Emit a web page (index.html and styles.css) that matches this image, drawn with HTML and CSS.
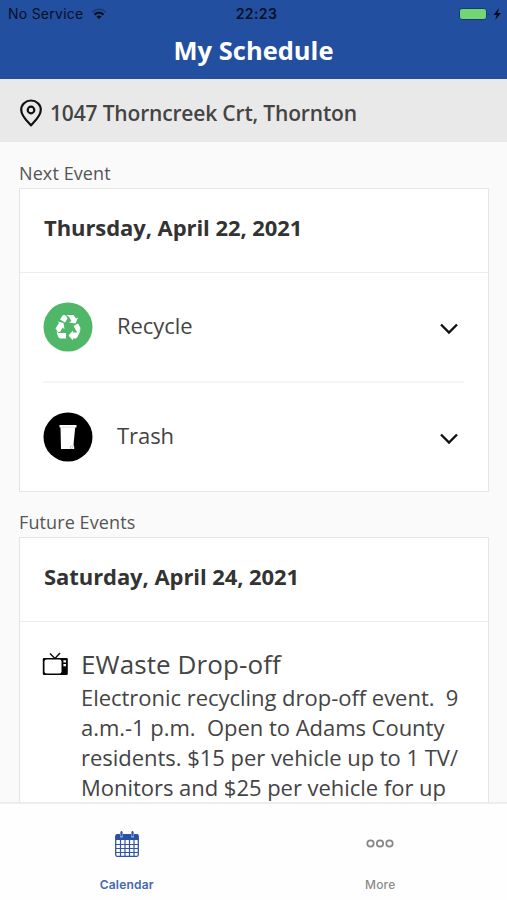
FILE: index.html
```html
<!DOCTYPE html>
<html lang="en">
<head>
    <meta charset="UTF-8">
    <meta name="viewport" content="width=device-width, initial-scale=1.0">
    <title>My Schedule</title>
    <link rel="stylesheet" href="styles.css">
</head>
<body>
    <header class="header">
        <div class="status">
            <div class="carrier">
                <span>No Service</span>
                <svg width="16" height="12" viewBox="0 0 16 12" fill="none" stroke="#08101f">
                    <path d="M1 4.2Q8 -2 15 4.2" stroke-width="1.3" opacity=".4" />
                    <path d="M3.4 6.6Q8 2.8 12.6 6.6" stroke-width="2.1" />
                    <path d="M5.4 8.4Q8 6.6 10.6 8.4L8 11z" fill="#08101f" stroke="none" />
                </svg>
            </div>
            <span class="clock">22:23</span>
            <div class="power">
                <svg width="45" height="14" viewBox="0 0 45 14">
                    <rect x="1.5" y="1.5" width="27" height="11" rx="2.5" fill="#73d673" stroke="#173a78" />
                    <path d="M30.5 5.5q2 1.5 0 3z" fill="#173a78" />
                    <path d="M41 1L35.5 8h3.2l-1.5 5L43 6h-3.3z" fill="#050b18" />
                </svg>
            </div>
        </div>
        <h1>My Schedule</h1>
    </header>

    <div class="address">
        <svg width="24" height="28" viewBox="0 0 24 28" fill="none" stroke="#111" stroke-width="2.2">
            <path d="M12 26.2C9.5 23.5 2.2 17.5 2.2 10.8a9.8 9.3 0 0 1 19.6 0C21.8 17.5 14.5 23.5 12 26.2z" />
            <circle cx="12" cy="11" r="3.3" />
        </svg>
        <span>1047 Thorncreek Crt, Thornton</span>
    </div>

    <main class="content">
        <h2 class="section-title">Next Event</h2>
        <section class="card next">
            <h3 class="date">Thursday, April 22, 2021</h3>
            <div class="row">
                <svg class="icon" width="50" height="50" viewBox="-25 -25 50 50">
                    <circle r="24.5" fill="#50b768" />
                    <g fill="#fff">
                        <path d="M-1.5 -12H5.5L8 -8.5L10 -9.5L7.5 -3.5L1 -4.5L3.5 -6L.5 -10.5z" />
                        <path d="M-4.5 -12Q-2.5 -12.5 -1.5 -10.5L-.5 -8.5L-3 -4.5L-8 -7.5L-5.5 -11.5z" />
                        <path d="M-10.5 -5.5L-4.5 -4L-3.5 2L-5.5 .8L-8 5H-10L-12.5 1.5L-9 -4z" />
                        <path d="M-11.5 4L-9.5 6H-2V11.5H-7.5Q-9 11.5 -10 9.5z" />
                        <path d="M5 3.5V5.5H8.5L12.5 3.5L9.5 10Q8.5 11.5 7 11.5H5V13.5L.5 8.5z" />
                        <path d="M10 -3.5L12.3 .5Q12.8 2 11.8 3.5Q11 5 9 5L5.5 -1z" />
                    </g>
                </svg>
                <span class="name">Recycle</span>
                <svg class="chevron" width="20" height="14" viewBox="0 0 20 14"><path d="M2 2.5L10 10.5L18 2.5" /></svg>
            </div>
            <div class="row">
                <svg class="icon" width="50" height="50" viewBox="-25 -25 50 50">
                    <circle r="24.5" fill="#000" />
                    <path d="M-8.5 -12H8.5V-9.5H7.2L5.5 8L6.2 9.5V12H-7L-7.5 -9.5H-8.5z" fill="#fff" />
                    <circle cx="3.6" cy="10.2" r="1.3" fill="#fff" stroke="#aaa" stroke-width=".6" />
                    <path d="M-8 -9.8H7" stroke="#bbb" stroke-width=".5" />
                </svg>
                <span class="name">Trash</span>
                <svg class="chevron" width="20" height="14" viewBox="0 0 20 14"><path d="M2 2.5L10 10.5L18 2.5" /></svg>
            </div>
        </section>

        <h2 class="section-title">Future Events</h2>
        <section class="card">
            <h3 class="date">Saturday, April 24, 2021</h3>
            <div class="event">
                <svg width="27" height="24" viewBox="0 0 27 24">
                    <path d="M8 1.5L13 6.5L18 1" fill="none" stroke="#111" stroke-width="1.5" />
                    <rect x=".8" y="6" width="25" height="17" rx="1.2" fill="#050505" />
                    <rect x="2.5" y="7.6" width="17" height="13.8" rx="2" fill="#fff" />
                    <path d="M21.4 8.2h2.6v2.2h-2.6zM21.4 12h2.6v2.2h-2.6z" fill="#fff" />
                </svg>
                <div class="details">
                    <h4>EWaste Drop-off</h4>
                    <p>Electronic recycling drop-off event.&nbsp; 9<br>
                        a.m.-1 p.m.&nbsp; Open to Adams County<br>
                        residents. $15 per vehicle up to 1 TV/<br>
                        Monitors and $25 per vehicle for up</p>
                </div>
            </div>
        </section>
    </main>

    <nav class="tabs">
        <div class="tab active">
            <svg width="26" height="28" viewBox="0 0 26 28" fill="none" stroke="#3156a5">
                <rect x="1.7" y="4.7" width="22.6" height="21.6" rx="1.5" stroke-width="1.3" />
                <path d="M2 4.5H24V10H2z" fill="#2850a4" stroke="none" />
                <path d="M2 14.5H24M2 18.5H24M2 22.5H24M6.5 10V26M11 10V26M15.5 10V26M20 10V26" stroke-width="1.2" />
                <path d="M7.5 2V7.5M18.5 2V7.5" stroke="#8ba5dc" stroke-width="2.8" />
                <path d="M7.5 1V6M18.5 1V6" stroke-width="1.5" />
            </svg>
            <span>Calendar</span>
        </div>
        <div class="tab">
            <svg width="30" height="28" viewBox="0 0 30 28" fill="none" stroke="#858585" stroke-width="1.7">
                <circle cx="5.5" cy="13.5" r="3.2" />
                <circle cx="15" cy="13.5" r="3.2" />
                <circle cx="24.5" cy="13.5" r="3.2" />
            </svg>
            <span>More</span>
        </div>
    </nav>
</body>
</html>
```

FILE: styles.css
```css
* {
    box-sizing: border-box;
}

body {
    display: flex;
    flex-direction: column;
    height: 900px;
    margin: 0;
    overflow: hidden;
    font-family: "Open Sans", "Noto Sans", sans-serif;
    color: #444;
    background-color: #fafafa;
}

h1, h2, h3, h4, p {
    margin: 0;
}

svg {
    display: block;
    flex: none;
}

.header {
    flex: none;
    height: 79px;
    background-color: #234fa0;
}

.status {
    display: grid;
    grid-template-columns: 1fr auto 1fr;
    align-items: center;
    height: 27px;
    padding: 0 4px 0 8px;
    font-family: Inter, Roboto, sans-serif;
    font-size: 14px;
    color: #08101f;
}

.carrier {
    display: flex;
    align-items: center;
    gap: 8px;
    letter-spacing: 0.25px;
}

.clock {
    font-weight: 600;
    letter-spacing: 0.4px;
    padding-left: 2px;
}

.power {
    display: flex;
    justify-content: flex-end;
}

.header h1 {
    font-size: 25.5px;
    font-weight: 700;
    line-height: 46px;
    text-align: center;
    color: #fff;
}

.address {
    display: flex;
    flex: none;
    align-items: center;
    gap: 7px;
    height: 63px;
    padding: 5px 19px 0;
    font-size: 21px;
    font-weight: 600;
    letter-spacing: -0.17px;
    background-color: #e9e9e9;
}

.content {
    flex: 1;
    min-height: 0;
    padding: 16px 18px 0 19px;
    overflow: hidden;
}

.section-title {
    height: 30px;
    font-size: 18px;
    font-weight: 400;
    line-height: 31px;
    letter-spacing: 0.1px;
    color: #555;
}

.card {
    border: 1px solid #e6e6e6;
    background-color: #fff;
}

.next {
    height: 304px;
    margin-bottom: 15px;
}

.date {
    height: 84px;
    padding-left: 24px;
    font-size: 22px;
    font-weight: 700;
    line-height: 77px;
    letter-spacing: -0.07px;
    color: #333;
    border-bottom: 1px solid #ececec;
}

.row {
    display: flex;
    align-items: center;
    height: 108px;
    margin: 0 24px 0 23px;
}

.row + .row {
    height: 110px;
    border-top: 2px solid #f5f5f5;
}

.name {
    flex: 1;
    padding-left: 24px;
    margin-top: -5px;
    font-size: 22px;
    letter-spacing: -0.05px;
}

.chevron {
    margin: 3px 5px 0 0;
    fill: none;
    stroke: #111;
    stroke-width: 2.4;
}

.event {
    display: flex;
    gap: 12px;
    padding: 25px 0 0 22px;
}

.event > svg {
    margin-top: 5px;
}

.details {
    white-space: nowrap;
}

.details h4 {
    font-size: 26px;
    font-weight: 400;
    line-height: 35px;
    letter-spacing: 0.1px;
}

.details p {
    font-size: 22px;
    line-height: 30px;
    letter-spacing: -0.03px;
}

.tabs {
    display: flex;
    flex: none;
    height: 98px;
    border-top: 2px solid #ededed;
    background-color: #fefefe;
}

.tab {
    display: flex;
    flex: 1;
    flex-direction: column;
    align-items: center;
    gap: 18px;
    padding-top: 26px;
    font-family: Inter, Roboto, sans-serif;
    font-size: 12px;
    font-weight: 500;
    line-height: 18px;
    letter-spacing: 0.2px;
    color: #8c8c8c;
}

.active {
    font-weight: 600;
    color: #4468b4;
}
```
